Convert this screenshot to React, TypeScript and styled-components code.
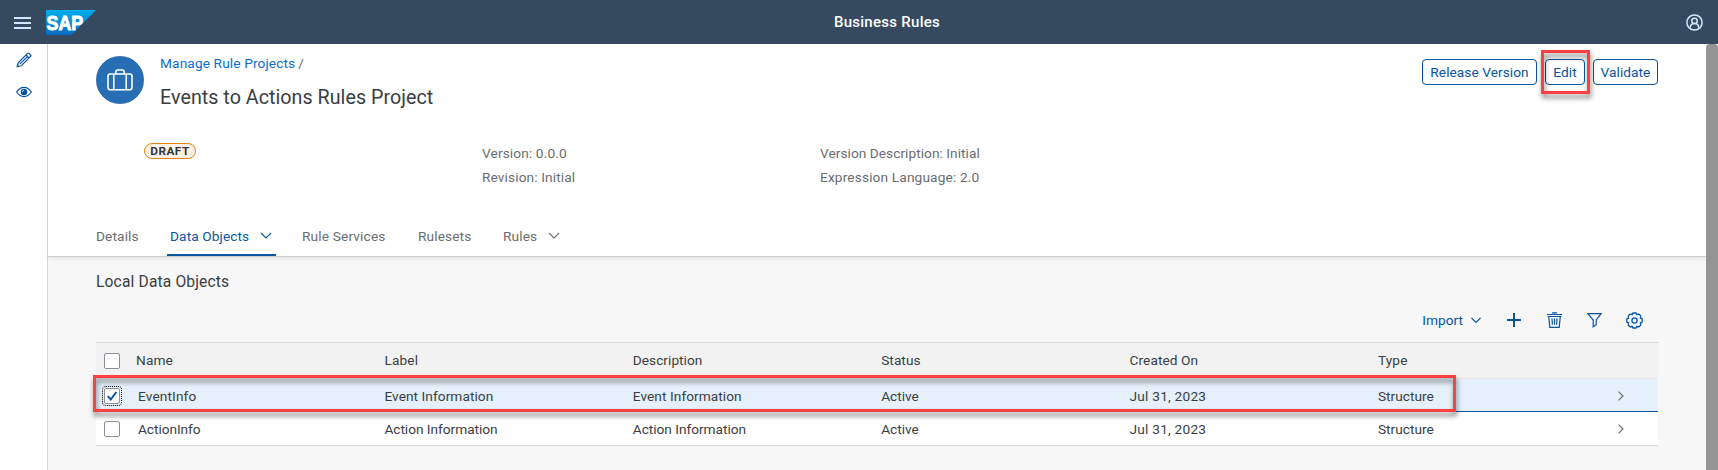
import React from "react";
import styled, { createGlobalStyle } from "styled-components";

const blue = "#0854a0";

const GlobalStyle = createGlobalStyle`
  *, *::before, *::after { box-sizing: border-box; }
  body { margin: 0; overflow: hidden; font-family: Roboto, sans-serif; font-size: 13.7px; color: #3a3e42; }
`;

const Page = styled.div`
  position: relative;
  display: flex;
  flex-direction: column;
  width: 1718px;
  height: 470px;
  overflow: hidden;
  background: #f7f7f7;
`;

const Text = styled.span<{ $track?: number }>`
  white-space: nowrap;
  letter-spacing: ${(p) => p.$track ?? 0.12}px;
`;

const ShellBar = styled.header`
  display: grid;
  grid-template-columns: 1fr auto 1fr;
  align-items: center;
  flex: none;
  height: 44px;
  padding: 0 15px 0 14px;
  background: #354a5f;
`;

const ShellStart = styled.div`
  display: flex;
  align-items: center;
  gap: 15px;
  padding-top: 1px;
`;

const ShellTitle = styled.h1`
  margin: 0 0 0 57px;
  color: #fff;
  font-size: 15px;
  font-weight: 500;
  line-height: 20px;
`;

const ShellEnd = styled.div`
  display: flex;
  justify-content: flex-end;
`;

const Body = styled.div`
  display: flex;
  flex: 1;
  min-height: 0;
`;

const SideNav = styled.nav`
  display: flex;
  flex-direction: column;
  align-items: center;
  gap: 16px;
  flex: none;
  width: 48px;
  padding-top: 8px;
  background: #fff;
  border-right: 1px solid #d9d9d9;
`;

const Main = styled.main`
  flex: 1;
  min-width: 0;
`;

const Scrollbar = styled.div`
  flex: none;
  width: 12px;
  background: #949494;
  border-radius: 4px 4px 0 0;
`;

const ObjectHeader = styled.section`
  display: flex;
  flex-direction: column;
  height: 213px;
  padding: 12px 48px 0;
  background: #fff;
  border-bottom: 1px solid #d1d1d1;
  box-shadow: 0 2px 4px rgba(0, 0, 0, 0.08);
`;

const HeadRow = styled.div`
  display: flex;
  align-items: flex-start;
  height: 84px;
`;

const Avatar = styled.div`
  display: grid;
  place-items: center;
  width: 48px;
  height: 48px;
  border-radius: 50%;
  background: #286eb4;
`;

const Titles = styled.div`
  flex: 1;
  padding: 0 0 0 16px;
`;

const Breadcrumb = styled.div`
  margin-top: -1px;
  line-height: 16px;
  color: #6a6d70;
`;

const Link = styled.a`
  color: #0a6ed1;
  margin-right: 3px;
`;

const Title = styled.h2`
  margin: 15px 0 0;
  font-size: 19.7px;
  font-weight: 400;
  line-height: 24px;
`;

const Actions = styled.div`
  display: flex;
  gap: 8px;
  padding-top: 3px;
`;

const ActionButton = styled.button<{ $width: number }>`
  width: ${(p) => p.$width}px;
  height: 26px;
  padding: 0;
  border: 1px solid ${blue};
  border-radius: 4px;
  background: #fff;
  color: ${blue};
  font: inherit;
  line-height: 24px;
`;

const Facts = styled.div`
  display: grid;
  grid-template-columns: 338px 338px auto;
  align-items: start;
  padding-left: 48px;
  height: 75px;
  color: #6a6d70;
`;

const Draft = styled.span`
  display: block;
  width: 52px;
  height: 16px;
  margin-top: 3px;
  border: 1px solid #df8316;
  border-radius: 8px;
  background: #fef2e5;
  color: #32363a;
  font-size: 11.8px;
  font-weight: 700;
  line-height: 15px;
  text-align: center;
`;

const FactList = styled.div`
  display: flex;
  flex-direction: column;
  padding-top: 1px;
  line-height: 24px;
`;

const Tabs = styled.div`
  display: flex;
  height: 41px;
`;

const Tab = styled.div<{ $active?: boolean; $left: number; $width: number }>`
  display: flex;
  justify-content: space-between;
  align-items: flex-start;
  width: ${(p) => p.$width}px;
  margin-left: ${(p) => p.$left}px;
  padding: ${(p) => (p.$active ? "13px 4px 0 3px" : "13px 0 0")};
  line-height: 16px;
  color: ${(p) => (p.$active ? blue : "#6a6d70")};
  border-bottom: 2px solid ${(p) => (p.$active ? blue : "transparent")};
  border-radius: 1px 1px 0 0;
  svg { margin-top: 4px; }
`;

const Content = styled.section`
  padding: 15px 48px 0;
`;

const SectionTitle = styled.h3`
  margin: 0;
  font-size: 15.6px;
  font-weight: 400;
  line-height: 20px;
`;

const Toolbar = styled.div`
  display: flex;
  justify-content: flex-end;
  align-items: center;
  height: 44px;
  margin-top: 6px;
  padding-right: 15px;
  color: ${blue};
`;

const Tool = styled.span<{ $gap: number }>`
  display: flex;
  align-items: center;
  gap: 8px;
  margin-left: ${(p) => p.$gap}px;
`;

const Table = styled.div`
  border-top: 1px solid #d9d9d9;
`;

const Row = styled.div<{ $kind: "head" | "selected" | "plain" }>`
  display: grid;
  grid-template-columns: 40px repeat(5, 248.4px) 1fr;
  align-items: center;
  height: ${(p) => (p.$kind === "head" ? 36 : p.$kind === "plain" ? 34 : 33)}px;
  padding-top: ${(p) => (p.$kind === "selected" ? 2 : p.$kind === "plain" ? 1 : 0)}px;
  background: ${(p) => ({ head: "#f2f2f2", selected: "#e5f0fa", plain: "#fff" })[p.$kind]};
  border-bottom: 1px solid ${(p) => ({ head: "#e4e4e4", selected: blue, plain: "#d9d9d9" })[p.$kind]};
`;

const Cell = styled.div<{ $indent?: boolean; $head?: boolean }>`
  display: flex;
  padding-left: ${(p) => (p.$indent ? 2 : 0)}px;
  padding-bottom: ${(p) => (p.$head ? 1 : 0)}px;
  line-height: 16px;
`;

const LastCell = styled(Cell)`
  justify-content: space-between;
  align-items: center;
  padding-right: 33px;
`;

const Check = styled.span<{ $focus?: boolean }>`
  display: grid;
  place-items: center;
  width: 16px;
  height: 16px;
  margin-left: 8px;
  border: 1px solid #89919a;
  border-radius: 2px;
  background: #fff;
  outline: ${(p) => (p.$focus ? "1px dotted #000" : "none")};
  outline-offset: 1px;
`;

const Highlight = styled.div<{ $x: number; $y: number; $w: number; $h: number }>`
  position: absolute;
  left: ${(p) => p.$x}px;
  top: ${(p) => p.$y}px;
  width: ${(p) => p.$w}px;
  height: ${(p) => p.$h}px;
  border: 3px solid #ff4040;
  filter: drop-shadow(1px 4px 2.5px rgba(0, 0, 0, 0.5));
  pointer-events: none;
`;

const ChevronDown = () => (
  <svg width="12" height="8" viewBox="0 0 12 8" fill="none" stroke="currentColor" strokeWidth="1.1">
    <path d="M1 1l5 5 5-5" />
  </svg>
);

const ChevronRight = () => (
  <svg width="8" height="10" viewBox="0 0 8 10" fill="none" stroke="#6a6d70" strokeWidth="1.2">
    <path d="M1.500 .6L6 5 1.500 9.400" />
  </svg>
);

const Logo = () => (
  <svg width="50" height="25" viewBox="0 0 50 25">
    <defs>
      <linearGradient id="logo" x1="0" y1="0" x2="0" y2="1">
        <stop offset="0" stopColor="#00aeef" />
        <stop offset="1" stopColor="#0a6abf" />
      </linearGradient>
    </defs>
    <path d="M0 0h50L25.500 25H0z" fill="url(#logo)" />
    <text x="0.600" y="20" fill="#fff" stroke="#fff" strokeWidth="1" fontFamily="Liberation Sans, sans-serif" fontWeight="700" fontSize="20.500" textLength="36.500" lengthAdjust="spacingAndGlyphs">SAP</text>
  </svg>
);

const rows = [
  { name: "EventInfo", info: "Event Information", selected: true, tracks: [0.12, 0.06] },
  { name: "ActionInfo", info: "Action Information", selected: false, tracks: [-0.06, -0.03] },
];

export default function App() {
  return (
    <Page>
      <GlobalStyle />
      <ShellBar>
        <ShellStart>
          <svg width="17" height="12" viewBox="0 0 17 12" stroke="#d1e8ff" strokeWidth="2">
            <path d="M0 1h17M0 6h17M0 11h17" />
          </svg>
          <Logo />
        </ShellStart>
        <ShellTitle><Text $track={0.28}>Business Rules</Text></ShellTitle>
        <ShellEnd>
          <svg width="17" height="17" viewBox="0 0 17 17" fill="none" stroke="#d1e8ff" strokeWidth="1.500">
            <circle cx="8.500" cy="8.500" r="7.600" />
            <circle cx="8.500" cy="6.900" r="2.700" />
            <path d="M4.300 13.800c0-2.700 1.600-4.200 4.200-4.200s4.200 1.500 4.200 4.200" />
          </svg>
        </ShellEnd>
      </ShellBar>
      <Body>
        <SideNav>
          <svg width="16" height="16" viewBox="0 0 16 16" fill="none" stroke={blue} strokeWidth="1.200">
            <path d="M1.200 14.800l1-4L11.600 1.400q.7-.7 1.400 0l1.600 1.600q.7.700 0 1.400L5.200 13.800zM10 3l3 3M3.800 12.200l7.600-7.600" />
            <path d="M1 15l.6-2.400 1.800 1.800z" fill={blue} stroke="none" />
          </svg>
          <svg width="16" height="16" viewBox="0 0 16 16" fill="none" stroke={blue} strokeWidth="1.200">
            <path d="M.6 8Q3.800 3.400 8 3.400T15.400 8Q12.200 12.600 8 12.600T.6 8z" />
            <circle cx="8" cy="8" r="3.300" fill={blue} stroke="none" />
            <path d="M8 6.300A1.700 1.700 0 0 0 6.300 8" stroke="#fff" strokeWidth=".8" />
          </svg>
        </SideNav>
        <Main>
          <ObjectHeader>
            <HeadRow>
              <Avatar>
                <svg width="26" height="22" viewBox="0 0 26 22" fill="none" stroke="#fff" strokeWidth="1.600">
                  <rect x="1" y="5" width="24" height="15.700" rx="2.200" />
                  <path d="M6.800 5v16M19.200 5v16" strokeWidth="1.500" />
                  <path d="M8.800 5V2.800q0-1.800 1.800-1.800h4.800q1.800 0 1.800 1.800V5" />
                </svg>
              </Avatar>
              <Titles>
                <Breadcrumb>
                  <Link><Text>Manage Rule Projects</Text></Link>/
                </Breadcrumb>
                <Title><Text $track={0.03}>Events to Actions Rules Project</Text></Title>
              </Titles>
              <Actions>
                <ActionButton $width={115}><Text $track={0.05}>Release Version</Text></ActionButton>
                <ActionButton $width={40}><Text>Edit</Text></ActionButton>
                <ActionButton $width={65}><Text $track={0.05}>Validate</Text></ActionButton>
              </Actions>
            </HeadRow>
            <Facts>
              <Draft><Text $track={0.5}>DRAFT</Text></Draft>
              <FactList>
                <Text>Version: 0.0.0</Text>
                <Text>Revision: Initial</Text>
              </FactList>
              <FactList>
                <Text $track={0.04}>Version Description: Initial</Text>
                <Text $track={0.14}>Expression Language: 2.0</Text>
              </FactList>
            </Facts>
            <Tabs>
              <Tab $left={0} $width={43}><Text>Details</Text></Tab>
              <Tab $active $left={28} $width={109}><Text $track={0.1}>Data Objects</Text><ChevronDown /></Tab>
              <Tab $left={26} $width={84}><Text $track={0.15}>Rule Services</Text></Tab>
              <Tab $left={32} $width={53}><Text>Rulesets</Text></Tab>
              <Tab $left={32} $width={57}><Text>Rules</Text><ChevronDown /></Tab>
            </Tabs>
          </ObjectHeader>
          <Content>
            <SectionTitle><Text $track={0.15}>Local Data Objects</Text></SectionTitle>
            <Toolbar>
              <Tool $gap={0}><Text $track={0}>Import</Text><svg width="10" height="7" viewBox="0 0 10 7" fill="none" stroke="currentColor" strokeWidth="1.100"><path d="M.5 1L5 5.500 9.500 1" /></svg></Tool>
              <Tool $gap={26}>
                <svg width="14" height="14" viewBox="0 0 14 14" stroke="currentColor" strokeWidth="2"><path d="M0 7h14M7 0v14" /></svg>
              </Tool>
              <Tool $gap={26}>
                <svg width="15" height="16" viewBox="0 0 15 16" fill="none" stroke="currentColor" strokeWidth="1.200">
                  <path d="M0 2.500h15M5 .8h5M1.700 4.500l1.100 10.800h9.400l1.100-10.800M.7 4.500h13.600M5 6.500l.4 6.300M7.500 6.500v6.300M10 6.500l-.4 6.300" />
                </svg>
              </Tool>
              <Tool $gap={25}>
                <svg width="15" height="16" viewBox="0 0 15 16" fill="none" stroke="currentColor" strokeWidth="1.200">
                  <path d="M.9 1.600h13.200L9.200 8v4.800l-3 2V8z" />
                </svg>
              </Tool>
              <Tool $gap={24}>
                <svg width="17" height="17" viewBox="0 0 17 17" fill="none" stroke="currentColor" strokeWidth="1.300" strokeLinejoin="round">
                  <circle cx="8.500" cy="8.500" r="2.600" />
                  <path d="M6.900 1h3.200l.7 1.700q1.200-.6 2.300-.4l1.600 1.600q.2 1.100-.4 2.300l1.900.7v3.200l-1.900.7q.6 1.200.4 2.300l-1.600 1.600q-1.100.2-2.300-.4L10.100 16H6.900l-.7-1.700q-1.200.6-2.300.4l-1.600-1.600q-.2-1.100.4-2.300L.8 10.100V6.900l1.900-.7q-.6-1.200-.4-2.300l1.600-1.600q1.100-.2 2.300.4z" />
                </svg>
              </Tool>
            </Toolbar>
            <Table>
              <Row $kind="head">
                <Check />
                <Cell $head><Text>Name</Text></Cell>
                <Cell $head><Text>Label</Text></Cell>
                <Cell $head><Text $track={0.03}>Description</Text></Cell>
                <Cell $head><Text $track={0.05}>Status</Text></Cell>
                <Cell $head><Text $track={0.05}>Created On</Text></Cell>
                <Cell $head><Text>Type</Text></Cell>
              </Row>
              {rows.map((r) => (
                <Row key={r.name} $kind={r.selected ? "selected" : "plain"}>
                  <Check $focus={r.selected}>
                    {r.selected && (
                      <svg width="12" height="12" viewBox="0 0 12 12" fill="none" stroke={blue} strokeWidth="2">
                        <path d="M1.800 6.200l3 3.300L10.300 2" />
                      </svg>
                    )}
                  </Check>
                  <Cell $indent><Text $track={r.tracks[0]}>{r.name}</Text></Cell>
                  <Cell><Text $track={r.tracks[1]}>{r.info}</Text></Cell>
                  <Cell><Text $track={r.tracks[1]}>{r.info}</Text></Cell>
                  <Cell><Text $track={0}>Active</Text></Cell>
                  <Cell><Text $track={0.22}>Jul 31, 2023</Text></Cell>
                  <LastCell><Text $track={0}>Structure</Text><ChevronRight /></LastCell>
                </Row>
              ))}
            </Table>
          </Content>
        </Main>
        <Scrollbar />
      </Body>
      <Highlight $x={1541} $y={50} $w={49} $h={44} />
      <Highlight $x={93} $y={375} $w={1363} $h={37} />
    </Page>
  );
}
